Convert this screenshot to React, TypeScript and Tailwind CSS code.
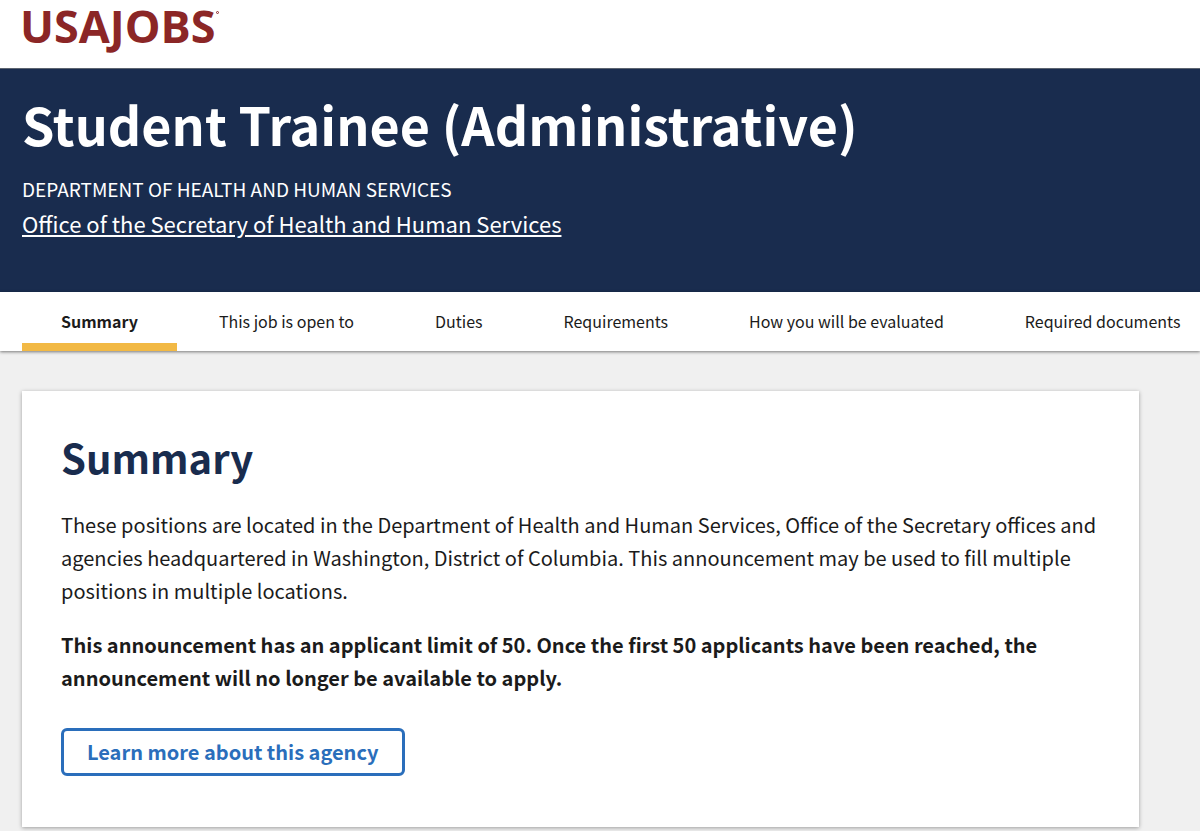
import React, { useState } from 'react';

const sections = [
  'Summary',
  'This job is open to',
  'Duties',
  'Requirements',
  'How you will be evaluated',
  'Required documents',
];

const SiteHeader: React.FC = () => (
  <header className="h-[68px] bg-white px-5">
    <a
      href="#"
      aria-label="USAJOBS home"
      className="inline-flex items-start font-['Open_Sans'] text-[#8b2626]"
    >
      <span className="text-[45px] font-bold leading-[52px]">USAJOBS</span>
      <span className="mt-[11px] size-[3px] rounded-full border border-[#8b2626]" />
    </a>
  </header>
);

const JobBanner: React.FC = () => (
  <div className="h-56 border-t border-[#5c6470] bg-[#192c4e] px-[22px] pt-[23px] text-white">
    <h1 className="text-[52px] font-bold leading-[64px]">Student Trainee (Administrative)</h1>
    <p className="mt-[17px] text-[19px] leading-8 uppercase">Department of Health and Human Services</p>
    <a href="#" className="mt-[2px] inline-block text-[22px] leading-8 underline underline-offset-2">
      Office of the Secretary of Health and Human Services
    </a>
  </div>
);

interface SectionNavProps {
  active: string;
  onSelect: (name: string) => void;
}

const SectionNav: React.FC<SectionNavProps> = ({ active, onSelect }) => (
  <nav className="relative overflow-hidden bg-white pl-[22px] shadow-[0_1px_3px_rgba(0,0,0,0.5)]">
    <ul className="flex gap-[3px]">
      {sections.map((name) => (
        <li key={name} className="shrink-0">
          <a
            href="#summary"
            onClick={() => onSelect(name)}
            className={`block h-[59px] border-b-8 px-[39px] pt-[5px] text-[16px] leading-[48px] whitespace-nowrap ${
              active === name ? 'border-[#f2b945] font-bold' : 'border-transparent'
            }`}
          >
            {name}
          </a>
        </li>
      ))}
    </ul>
  </nav>
);

const SummaryCard: React.FC = () => (
  <section
    id="summary"
    className="mr-[61px] ml-[22px] bg-white px-[39px] pt-[38px] pb-[51px] shadow-[0_1px_4px_rgba(0,0,0,0.35)]"
  >
    <h2 className="text-[40px] font-bold leading-[56px] text-[#192c4e]">Summary</h2>
    <div className="mt-[23px] space-y-[21px] text-[20px] leading-[33px]">
      <p>
        These positions are located in the Department of Health and Human Services, Office of the Secretary offices and
        agencies headquartered in Washington, District of Columbia. This announcement may be used to fill multiple
        positions in multiple locations.
      </p>
      <p className="font-bold">
        This announcement has an applicant limit of 50. Once the first 50 applicants have been reached, the
        announcement will no longer be available to apply.
      </p>
    </div>
    <a
      href="#"
      className="mt-[34px] inline-flex h-12 items-center rounded-md border-[3px] border-[#2a6ebb] px-[23px] text-[20px] font-bold text-[#2a6ebb]"
    >
      Learn more about this agency
    </a>
  </section>
);

const App: React.FC = () => {
  const [active, setActive] = useState('Summary');

  return (
    <div className="min-h-screen overflow-x-hidden bg-[#f0f0f0] font-['Noto_Sans_CJK_SC',sans-serif] text-[#1b1b1b]">
      <SiteHeader />
      <JobBanner />
      <SectionNav active={active} onSelect={setActive} />
      <main className="pt-10">
        <SummaryCard />
      </main>
    </div>
  );
};

export default App;
